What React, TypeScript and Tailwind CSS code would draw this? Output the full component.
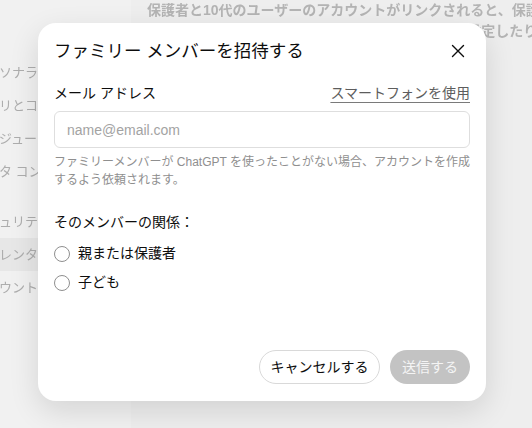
const font = "font-['Liberation_Sans','Noto_Sans_CJK_JP',sans-serif]";

const sideTop = ["パーソナライズ", "アプリとコネクター", "スケジュール", "データ コントロール"];
const sideBottom = ["セキュリティ", "ペアレンタルコントロール", "アカウント"];

const Sidebar = () => (
  <aside className="w-[131px] shrink-0 bg-[#f1f1f1] overflow-hidden">
    <div className="pt-[56px] blur-[0.6px]">
      {sideTop.map((s) => (
        <div key={s} className="h-[33px] flex items-center">
          <span className="ml-[-27px] whitespace-nowrap text-[13px] text-[#adadad]">{s}</span>
        </div>
      ))}
      <div className="mt-[17px]">
        {sideBottom.map((s, i) => (
          <div key={s} className={`h-[33px] flex items-center ${i === 1 ? "bg-[#e7e7e7]" : ""}`}>
            <span className="ml-[-27px] whitespace-nowrap text-[13px] text-[#adadad]">{s}</span>
          </div>
        ))}
      </div>
    </div>
  </aside>
);

const Radio = ({ label }: { label: string }) => (
  <label className="h-[29px] flex items-center gap-2">
    <span className="w-4 h-4 rounded-full border border-[#8f8f8f] bg-white" />
    <span className="text-[14px] text-[#0d0d0d]">{label}</span>
  </label>
);

const InviteDialog = () => (
  <div className="absolute left-[38px] top-[23px] w-[448px] h-[378px] bg-white rounded-[18px] shadow-[0_10px_30px_rgba(0,0,0,0.12)] flex flex-col px-4 pb-[17px]">
    <div className="mt-[14px] h-7 flex items-center justify-between">
      <h2 className="text-[17.5px] text-[#0d0d0d] leading-7">ファミリー メンバーを招待する</h2>
      <button className="w-6 h-6 flex items-center justify-center">
        <svg width="24" height="24" viewBox="0 0 24 24" fill="none" stroke="#0d0d0d" strokeWidth="1.4" strokeLinecap="round">
          <path d="M6.5 6.5l11 11M17.5 6.5l-11 11" />
        </svg>
      </button>
    </div>

    <div className="mt-[18px] h-5 flex items-center justify-between text-[14px]">
      <span className="text-[#0d0d0d]">メール アドレス</span>
      <a className="text-[#5d5d5d] underline underline-offset-[4px] decoration-[#7a7a7a]">スマートフォンを使用</a>
    </div>

    <input
      placeholder="name@email.com"
      className="mt-2 h-[37px] w-full rounded-md border border-[#dedede] px-[12px] text-[14px] placeholder:text-[#a3a3a3] outline-none"
    />

    <p className="mt-[5px] text-[12px] leading-[18px] text-[#8f8f8f]">
      <span className="block whitespace-nowrap">ファミリーメンバーが ChatGPT を使ったことがない場合、アカウントを作成</span>
      <span className="block">するよう依頼されます。</span>
    </p>

    <p className="mt-[23px] h-5 leading-5 text-[14px] text-[#0d0d0d]">そのメンバーの関係：</p>
    <div className="mt-[7px] flex flex-col">
      <Radio label="親または保護者" />
      <Radio label="子ども" />
    </div>

    <div className="mt-auto flex justify-end gap-[10px]">
      <button className="h-[34px] w-[121px] rounded-full border border-[#d9d9d9] text-[14px] text-[#0d0d0d]">キャンセルする</button>
      <button className="h-[34px] w-[80px] rounded-full bg-[#c3c3c3] text-[14px] text-[#f4f4f4]">送信する</button>
    </div>
  </div>
);

export default function App() {
  return (
    <div className={`${font} relative w-full h-[428px] overflow-hidden flex bg-[#efefef]`}>
      <Sidebar />
      <main className="flex-1 bg-[#eeeeee] pl-4 overflow-hidden">
        <div className="blur-[0.6px] text-[14px] leading-[21px] text-[#b4b4b4] font-bold">
          <p className="whitespace-nowrap">保護者と10代のユーザーのアカウントがリンクされると、保護者はペアレンタルコントロール</p>
          <p className="whitespace-nowrap">ールを使用して、特定の機能を調整したり、制限を設定したりできます。</p>
        </div>
      </main>
      <InviteDialog />
    </div>
  );
}
